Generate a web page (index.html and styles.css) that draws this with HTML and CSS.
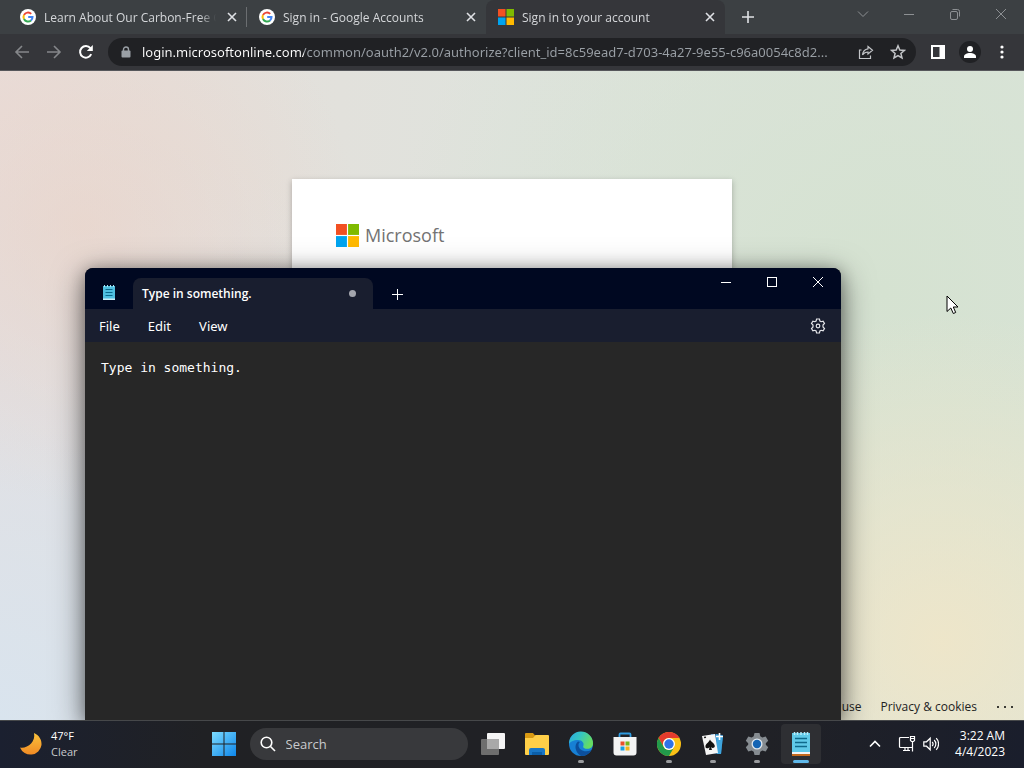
FILE: index.html
```html
<!DOCTYPE html>
<html lang="en">

<head>
    <meta charset="UTF-8">
    <meta name="viewport" content="width=device-width, initial-scale=1.0">
    <title>Sign in to your account</title>
    <link rel="stylesheet" href="styles.css">
</head>

<body>
    <div class="desktop">

        <!-- Browser -->
        <div class="browser">
            <div class="tab-strip">
                <div class="tab">
                    <svg class="favicon" viewBox="0 0 16 16">
                        <circle cx="8" cy="8" r="8" fill="#fff" />
                        <g fill="none" stroke-width="2">
                            <path d="M11.2 4.9A4.5 4.5 0 0 0 4 6" stroke="#ea4335" />
                            <path d="M4 6a4.5 4.5 0 0 0 0 4" stroke="#fbbc05" />
                            <path d="M4 10a4.5 4.5 0 0 0 7 1.4" stroke="#34a853" />
                            <path d="M11 11.4A4.5 4.5 0 0 0 12.5 8H8.2" stroke="#4285f4" />
                        </g>
                    </svg>
                    <span class="tab-title">Learn About Our Carbon-Free Go</span>
                    <button class="tab-close" aria-label="Close tab">
                        <svg width="10" height="10" viewBox="0 0 10 10"><path d="M1 1l8 8M9 1L1 9" /></svg>
                    </button>
                </div>
                <div class="tab">
                    <svg class="favicon" viewBox="0 0 16 16">
                        <circle cx="8" cy="8" r="8" fill="#fff" />
                        <g fill="none" stroke-width="2">
                            <path d="M11.2 4.9A4.5 4.5 0 0 0 4 6" stroke="#ea4335" />
                            <path d="M4 6a4.5 4.5 0 0 0 0 4" stroke="#fbbc05" />
                            <path d="M4 10a4.5 4.5 0 0 0 7 1.4" stroke="#34a853" />
                            <path d="M11 11.4A4.5 4.5 0 0 0 12.5 8H8.2" stroke="#4285f4" />
                        </g>
                    </svg>
                    <span class="tab-title">Sign in - Google Accounts</span>
                    <button class="tab-close" aria-label="Close tab">
                        <svg width="10" height="10" viewBox="0 0 10 10"><path d="M1 1l8 8M9 1L1 9" /></svg>
                    </button>
                </div>
                <div class="tab active">
                    <svg class="favicon" viewBox="0 0 16 16">
                        <path d="M0 0h7.5v7.5H0z" fill="#f25022" />
                        <path d="M8.5 0H16v7.5H8.5z" fill="#7fba00" />
                        <path d="M0 8.5h7.5V16H0z" fill="#00a4ef" />
                        <path d="M8.5 8.5H16V16H8.5z" fill="#ffb900" />
                    </svg>
                    <span class="tab-title">Sign in to your account</span>
                    <button class="tab-close" aria-label="Close tab">
                        <svg width="10" height="10" viewBox="0 0 10 10"><path d="M1 1l8 8M9 1L1 9" /></svg>
                    </button>
                </div>
                <button class="new-tab" aria-label="New tab">
                    <svg width="12" height="12" viewBox="0 0 12 12"><path d="M6 0v12M0 6h12" /></svg>
                </button>
                <div class="window-controls">
                    <button aria-label="Search tabs">
                        <svg width="12" height="12" viewBox="0 0 12 12"><path d="M1 3.5l5 5 5-5" /></svg>
                    </button>
                    <button aria-label="Minimize">
                        <svg width="12" height="12" viewBox="0 0 12 12"><path d="M1 6.5h10" /></svg>
                    </button>
                    <button aria-label="Restore">
                        <svg width="12" height="12" viewBox="0 0 12 12">
                            <rect x="1.5" y="3.5" width="7" height="8" rx="1.5" />
                            <path d="M3.5 1.5h5a2 2 0 0 1 2 2v5" />
                        </svg>
                    </button>
                    <button aria-label="Close">
                        <svg width="12" height="12" viewBox="0 0 12 12"><path d="M1 1l10 10M11 1L1 11" /></svg>
                    </button>
                </div>
            </div>

            <div class="toolbar">
                <button class="nav-btn disabled" aria-label="Back">
                    <svg width="16" height="16" viewBox="0 0 16 16"><path d="M15 8H2M8 2L2 8l6 6" /></svg>
                </button>
                <button class="nav-btn disabled" aria-label="Forward">
                    <svg width="16" height="16" viewBox="0 0 16 16"><path d="M1 8h13M8 2l6 6-6 6" /></svg>
                </button>
                <button class="nav-btn" aria-label="Reload">
                    <svg width="16" height="16" viewBox="0 0 16 16">
                        <path d="M13.2 10.2A5.8 5.8 0 1 1 12.4 4.2" />
                        <path d="M14.8 1v6H8.8z" fill="#fff" stroke="none" />
                    </svg>
                </button>
                <div class="address-bar">
                    <svg class="lock" width="10" height="12" viewBox="0 0 10 12">
                        <path d="M2.5 5V3.5a2.5 2.5 0 0 1 5 0V5" fill="none" stroke="#9aa0a6" stroke-width="1.4" />
                        <rect x="0.5" y="4.5" width="9" height="7" rx="1" fill="#9aa0a6" />
                    </svg>
                    <input type="text" class="url" aria-label="Address"
                        value="login.microsoftonline.com/common/oauth2/v2.0/authorize?client_id=8c59ead7-d703-4a27-9e55-c96a0054c8d2...">
                    <button class="address-btn" aria-label="Share">
                        <svg width="16" height="16" viewBox="0 0 16 16">
                            <path d="M3.5 6H1.5v8.5h11V11.5" />
                            <path d="M10 2.5l4.5 3.8L10 10V8C7.5 8 5.8 8.9 4.5 10.8 4.9 7.3 7 5.2 10 4.8z" />
                        </svg>
                    </button>
                    <button class="address-btn" aria-label="Bookmark">
                        <svg width="16" height="16" viewBox="0 0 16 16">
                            <path stroke-width="1.5" d="M8 1.8l1.8 4.2 4.6.4-3.5 3 1.1 4.5L8 11.5l-4 2.4 1.1-4.5-3.5-3 4.6-.4z" />
                        </svg>
                    </button>
                </div>
                <button class="nav-btn" aria-label="Side panel">
                    <svg width="14" height="14" viewBox="0 0 14 14">
                        <rect x="1" y="1" width="12" height="12" />
                        <path d="M8.5 1H13v12H8.5z" fill="#fff" stroke="none" />
                    </svg>
                </button>
                <button class="nav-btn" aria-label="Profile">
                    <svg width="22" height="22" viewBox="0 0 22 22">
                        <g stroke="none">
                            <circle cx="11" cy="11" r="11" fill="#202124" />
                            <circle cx="11" cy="8" r="3" fill="#fff" />
                            <path d="M5 17v-1.5c0-2.3 3-3.5 6-3.5s6 1.2 6 3.5V17z" fill="#fff" />
                        </g>
                    </svg>
                </button>
                <button class="nav-btn" aria-label="Menu">
                    <svg width="16" height="16" viewBox="0 0 16 16">
                        <g fill="#fff" stroke="none">
                            <circle cx="8" cy="3" r="1.6" />
                            <circle cx="8" cy="8" r="1.6" />
                            <circle cx="8" cy="13" r="1.6" />
                        </g>
                    </svg>
                </button>
            </div>

            <div class="page">
                <div class="login-card">
                    <div class="brand">
                        <svg width="23" height="23" viewBox="0 0 24 24">
                            <path d="M0 0h11.4v11.4H0z" fill="#f25022" />
                            <path d="M12.6 0H24v11.4H12.6z" fill="#7fba00" />
                            <path d="M0 12.6h11.4V24H0z" fill="#00a4ef" />
                            <path d="M12.6 12.6H24V24H12.6z" fill="#ffb900" />
                        </svg>
                        <span>Microsoft</span>
                    </div>
                </div>
                <div class="page-footer">
                    <a href="#">Terms of use</a>
                    <a href="#">Privacy &amp; cookies</a>
                    <a href="#" aria-label="More">
                        <svg width="18" height="16" viewBox="0 0 18 16">
                            <circle cx="2" cy="9" r="1" />
                            <circle cx="9" cy="9" r="1" />
                            <circle cx="16" cy="9" r="1" />
                        </svg>
                    </a>
                </div>
            </div>
        </div>

        <!-- Notepad -->
        <div class="notepad">
            <div class="notepad-title">
                <svg class="notepad-icon" width="14" height="16" viewBox="0 0 14 16">
                    <path d="M1 1h12v14H1z" fill="#4fbfe0" />
                    <path d="M1 13.5h12V15H1z" fill="#c9eef8" />
                    <path d="M2.5 0v2M5.5 0v2M8.5 0v2M11.5 0v2" stroke="#a9e6f5" />
                    <path d="M3.5 4.5h7M3.5 7.5h7M3.5 10.5h7" stroke="#0b6a8c" />
                </svg>
                <div class="notepad-tab">
                    <span>Type in something.</span>
                    <i class="unsaved"></i>
                </div>
                <button class="notepad-new" aria-label="New tab">
                    <svg width="12" height="12" viewBox="0 0 12 12"><path d="M6.5 1v11M1 6.5h11" /></svg>
                </button>
                <div class="notepad-controls">
                    <button aria-label="Minimize">
                        <svg width="12" height="12" viewBox="0 0 12 12"><path d="M1 6.5h10" /></svg>
                    </button>
                    <button aria-label="Maximize">
                        <svg width="12" height="12" viewBox="0 0 12 12"><rect x="1.5" y="1.5" width="9" height="9" /></svg>
                    </button>
                    <button aria-label="Close">
                        <svg width="12" height="12" viewBox="0 0 12 12"><path d="M1 1l10 10M11 1L1 11" /></svg>
                    </button>
                </div>
            </div>
            <div class="notepad-menu">
                <button>File</button>
                <button>Edit</button>
                <button>View</button>
                <button class="settings" aria-label="Settings">
                    <svg width="16" height="16" viewBox="0 0 16 16">
                        <path d="M6.6 1h2.8l.5 2 1.2.7 2-.6 1.4 2.4L13 7v2l1.500 1.500-1.400 2.400-2-.6-1.200.7-.5 2H6.600l-.5-2-1.200-.7-2 .6-1.400-2.400L3 9V7L1.500 5.500l1.400-2.400 2 .6L6.100 3z" />
                        <circle cx="8" cy="8" r="1.8" />
                    </svg>
                </button>
            </div>
            <textarea class="notepad-text" aria-label="Text editor" spellcheck="false">Type in something.</textarea>
        </div>

        <!-- Taskbar -->
        <div class="taskbar">
            <div class="weather">
                <svg width="24" height="24" viewBox="0 0 24 24">
                    <defs>
                        <linearGradient id="moon" x1="0" y1="0" x2="0" y2="1">
                            <stop offset="0" stop-color="#fbc33c" />
                            <stop offset="1" stop-color="#f08a24" />
                        </linearGradient>
                    </defs>
                    <path d="M15 1c5 2 8 7 7.5 12A11.2 11.2 0 0 1 1 15.5C8 17 17 10 15 1z" fill="url(#moon)" />
                </svg>
                <div>
                    <p class="temp">47°F</p>
                    <p class="sky">Clear</p>
                </div>
            </div>

            <div class="apps">
                <button class="app" aria-label="Start">
                    <svg width="24" height="24" viewBox="0 0 24 24">
                        <defs>
                            <linearGradient id="win" x1="0" y1="0" x2="24" y2="24" gradientUnits="userSpaceOnUse">
                                <stop offset="0" stop-color="#7cdcff" />
                                <stop offset="1" stop-color="#0d86ea" />
                            </linearGradient>
                        </defs>
                        <path d="M0 0h11.5v11.5H0zM12.5 0H24v11.5H12.5zM0 12.5h11.5V24H0zM12.5 12.5H24V24H12.5z" fill="url(#win)" />
                    </svg>
                </button>
                <label class="search">
                    <svg width="16" height="16" viewBox="0 0 16 16">
                        <circle cx="6.5" cy="6.5" r="5.3" />
                        <path d="M10.5 10.5l4.5 4.5" />
                    </svg>
                    <input type="text" placeholder="Search" aria-label="Search">
                </label>
                <button class="app" aria-label="Task view">
                    <svg width="24" height="24" viewBox="0 0 24 24">
                        <rect x="6" y="1" width="18" height="16" rx="1" fill="#f5f5f5" />
                        <rect x="0" y="7" width="18" height="16" rx="1" fill="#777" fill-opacity=".9" />
                        <path d="M6 7h12v10H6z" fill="#a9a9a9" />
                    </svg>
                </button>
                <button class="app" aria-label="File Explorer">
                    <svg width="26" height="24" viewBox="0 0 26 24">
                        <path d="M1 2a1 1 0 0 1 1-1h7l2.5 3v3H1z" fill="#d99a13" />
                        <path d="M1 6h8l2.5-3H24a1 1 0 0 1 1 1v18a1 1 0 0 1-1 1H2a1 1 0 0 1-1-1z" fill="#ffcf48" />
                        <path d="M5 23v-5a2 2 0 0 1 2-2h12a2 2 0 0 1 2 2v5z" fill="#1976c5" />
                        <path d="M8 20h10v3H8z" fill="#0b5ea8" />
                    </svg>
                </button>
                <button class="app running" aria-label="Edge">
                    <svg width="26" height="26" viewBox="0 0 26 26">
                        <defs>
                            <linearGradient id="edgeTop" x1="0" y1="0" x2="1" y2=".4">
                                <stop offset="0" stop-color="#2aa7e5" />
                                <stop offset=".5" stop-color="#35c6c0" />
                                <stop offset="1" stop-color="#66dc62" />
                            </linearGradient>
                        </defs>
                        <circle cx="13" cy="13" r="12" fill="#1780d4" />
                        <path d="M1 13a12 12 0 0 1 24-1c.3 4-2.5 5.8-5.5 5.8-2.5 0-5-.9-4.200-2.800C16.500 12 14 9 10 9c-4.500 0-8 2-9 4z" fill="url(#edgeTop)" />
                        <path d="M10 10.500c-3.500 2.500-4 10 3 14.500A12 12 0 0 0 23.500 19c-6 3-13 .5-13-5 0-1.500.7-2.500 1.500-3z" fill="#0c4f9c" />
                    </svg>
                </button>
                <button class="app" aria-label="Microsoft Store">
                    <svg width="24" height="24" viewBox="0 0 24 24">
                        <path d="M6.5 6V2.500a1 1 0 0 1 1-1h9a1 1 0 0 1 1 1V6" fill="none" stroke="#2f9be0" stroke-width="1.8" />
                        <path d="M.5 5h23v15.500a3 3 0 0 1-3 3h-17a3 3 0 0 1-3-3z" fill="#f3f3f3" />
                        <path d="M7.5 9.500h4v4h-4z" fill="#e9512b" />
                        <path d="M12.5 9.500h4v4h-4z" fill="#77b51b" />
                        <path d="M7.5 14.500h4v4h-4z" fill="#1a9fe0" />
                        <path d="M12.5 14.500h4v4h-4z" fill="#f5b41c" />
                    </svg>
                </button>
                <button class="app running" aria-label="Chrome">
                    <svg width="24" height="24" viewBox="0 0 24 24">
                        <circle cx="12" cy="12" r="12" fill="#fbc116" />
                        <path d="M1.6 6A12 12 0 0 1 22.4 6H12a6 6 0 0 0-5.2 9z" fill="#e33b2e" />
                        <path d="M1.6 6A12 12 0 0 0 12 24l5.2-9A6 6 0 0 1 6.8 15z" fill="#229a4b" />
                        <circle cx="12" cy="12" r="6" fill="#fff" />
                        <circle cx="12" cy="12" r="4.7" fill="#2f73e8" />
                    </svg>
                </button>
                <button class="app running" aria-label="Solitaire">
                    <svg width="24" height="24" viewBox="0 0 24 24">
                        <path d="M10 2l12 1-2 19-10-1z" fill="#1b72b8" />
                        <path d="M15 2l7 2-2 18h-4z" fill="#3fa5dd" />
                        <path d="M1 4l13-2 3 19-12 2z" fill="#f6f6f6" />
                        <path d="M9 7.5c1 2.5 5 4 4.8 6.8-.2 1.9-2.600 2.300-3.800.8l1 3H8l.5-3c-1 1.800-3.600 1.600-4-.2C4 12 8 10.500 9 7.500z" fill="#111" />
                        <path d="M3 5.5l2-.3" stroke="#222" stroke-width="1.5" />
                        <path d="M18.5 1v7M15 4.5h7" stroke="#fff" stroke-width="1.6" />
                    </svg>
                </button>
                <button class="app running" aria-label="Settings">
                    <svg width="24" height="24" viewBox="0 0 24 24">
                        <path d="M9.5 1h5l.8 3.3 2 1.200 3.400-1 2.500 4.300-2.400 2.400v1.600l2.400 2.400-2.500 4.300-3.400-1-2 1.200-.8 3.300h-5l-.8-3.300-2-1.200-3.400 1L.8 15.200l2.400-2.400v-1.600L.8 8.800l2.500-4.300 3.400 1 2-1.200z" fill="#858b90" />
                        <circle cx="12" cy="12" r="5.5" fill="#dfe7ee" />
                        <circle cx="12" cy="12" r="4.2" fill="#1464b4" />
                    </svg>
                </button>
                <button class="app current" aria-label="Notepad">
                    <svg width="20" height="26" viewBox="0 0 20 26">
                        <path d="M1 2h18v21H1z" fill="#60cae8" />
                        <path d="M1 21h18v2H1z" fill="#f4f4f4" />
                        <path d="M1 23h18v2H1z" fill="#c66a1c" />
                        <path d="M3.5 1v3M6.5 1v3M10 1v3M13.5 1v3M16.5 1v3" stroke="#b5ecf9" stroke-width="1.5" />
                        <path d="M4 7.5h12M4 11.5h12M4 15.5h12" stroke="#0f6a8b" stroke-width="1.6" />
                    </svg>
                </button>
            </div>

            <div class="tray">
                <button aria-label="Show hidden icons">
                    <svg width="12" height="12" viewBox="0 0 12 12"><path d="M1 8.5l5-5 5 5" stroke-width="1.6" /></svg>
                </button>
                <button aria-label="Network">
                    <svg width="18" height="18" viewBox="0 0 18 18">
                        <path d="M11 2.5H2.500a1 1 0 0 0-1 1v8a1 1 0 0 0 1 1h12M5 15.500h7M7 12.500v3M10 12.500v3" />
                        <path d="M12.5 1.500h4v4l-1 1h-2l-1-1zM14.500 6.500v10M12.500 3.500h4" />
                    </svg>
                </button>
                <button aria-label="Volume">
                    <svg width="16" height="16" viewBox="0 0 16 16">
                        <path d="M.8 5.800h2.700l3.700-3.600v11.600L3.500 10.200H.8z" />
                        <path d="M9.2 6a3 3 0 0 1 0 4M11.200 4a5.700 5.700 0 0 1 0 8M13.200 2.200a8.300 8.300 0 0 1 0 11.600" />
                    </svg>
                </button>
                <div class="clock">
                    <p>3:22 AM</p>
                    <p>4/4/2023</p>
                </div>
            </div>
        </div>

        <!-- Mouse pointer -->
        <svg class="pointer" width="14" height="20" viewBox="0 0 14 20">
            <path d="M1 1v15.500l3.800-3.500 2.500 5.500 2.400-1-2.400-5.500h4.700z" fill="#fff" stroke="#000" />
        </svg>
    </div>
</body>

</html>
```

FILE: styles.css
```css
:root {
    --ui-font: "Open Sans", "Noto Sans", sans-serif;
    --strip: #3c4043;
    --toolbar: #35363a;
    --field: #202124;
    --notepad-title: #000821;
    --notepad-menu: #191e2f;
    --notepad-body: #272727;
}

* {
    box-sizing: border-box;
    margin: 0;
    padding: 0;
}

body {
    font-family: var(--ui-font);
    font-size: 12px;
    overflow: hidden;
}

button {
    display: flex;
    align-items: center;
    justify-content: center;
    background: none;
    border: none;
    color: inherit;
    font: inherit;
}

input,
textarea {
    border: none;
    outline: none;
    background: none;
    font: inherit;
}

svg {
    flex-shrink: 0;
}

.desktop {
    position: relative;
    display: flex;
    flex-direction: column;
    height: 100vh;
}

/* Browser */
.browser {
    flex: 1;
    display: flex;
    flex-direction: column;
    min-height: 0;
}

.tab-strip {
    display: flex;
    height: 34px;
    padding-left: 8px;
    background: var(--strip);
    color: #d5d7da;
}

.tab {
    flex: 0 1 239px;
    min-width: 0;
    display: flex;
    align-items: center;
    gap: 8px;
    padding: 0 7px 0 12px;
}

.tab:first-child {
    background: linear-gradient(#6b6e71, #6b6e71) right center / 1px 20px no-repeat;
}

.tab.active {
    background: var(--toolbar);
    border-radius: 8px 8px 0 0;
}

.favicon {
    width: 16px;
    height: 16px;
}

.tab-title {
    flex: 1;
    overflow: hidden;
    white-space: nowrap;
    mask-image: linear-gradient(to right, #000 calc(100% - 16px), transparent);
}

.tab-close {
    width: 16px;
    height: 16px;
}

.tab-close svg,
.new-tab svg {
    stroke: #dfe1e5;
    stroke-width: 1.6;
}

.new-tab {
    width: 30px;
    margin-left: 8px;
}

.window-controls {
    display: flex;
    margin-left: auto;
    height: 28px;
}

.window-controls button {
    width: 46px;
}

.window-controls svg {
    fill: none;
    stroke: #8d9093;
}

.toolbar {
    display: flex;
    align-items: center;
    gap: 4px;
    height: 37px;
    padding: 0 8px;
    background: var(--toolbar);
    border-bottom: 1px solid #56575b;
}

.nav-btn {
    width: 28px;
    height: 28px;
}

.nav-btn svg {
    fill: none;
    stroke: #fff;
    stroke-width: 2;
}

.nav-btn.disabled svg {
    stroke: #85878a;
    stroke-width: 1.6;
}

.address-bar {
    flex: 1;
    display: flex;
    align-items: center;
    height: 28px;
    margin: 0 4px;
    padding: 0 2px 0 13px;
    background: var(--field);
    border-radius: 14px;
}

.url {
    flex: 1;
    min-width: 0;
    margin: 0 6px 0 11px;
    font-family: "Noto Sans", sans-serif;
    font-size: 13px;
    color: transparent;
    background: linear-gradient(to right, #fff 162px, #9aa0a6 162px);
    background-clip: text;
}

.address-btn {
    width: 32px;
    height: 28px;
}

.address-btn svg {
    fill: none;
    stroke: #c3c5c8;
    stroke-width: 1.2;
}

/* Sign-in page */
.page {
    flex: 1;
    display: flex;
    flex-direction: column;
    min-height: 0;
    background:
        radial-gradient(circle at 8% 24%, rgba(234, 212, 201, 0.7), transparent 26%),
        radial-gradient(circle at 92% 88%, rgba(240, 230, 200, 0.9), transparent 30%),
        radial-gradient(circle at 0% 100%, #d9e4ee, transparent 50%),
        radial-gradient(circle at 86% 34%, #d5e2d1, transparent 50%),
        linear-gradient(to right, #e8ddda, #dfe3dd 50%, #dae4da);
}

.login-card {
    width: 440px;
    min-height: 338px;
    margin: 108px auto 0;
    padding: 44px;
    background: #fff;
    box-shadow: 0 2px 6px rgba(0, 0, 0, 0.25);
}

.brand {
    display: flex;
    align-items: center;
    gap: 6px;
    height: 24px;
    color: #737373;
    font-size: 18px;
    font-weight: 500;
}

.page-footer {
    display: flex;
    align-items: center;
    justify-content: flex-end;
    gap: 19px;
    height: 28px;
    margin-top: auto;
    padding-right: 10px;
}

.page-footer a {
    display: flex;
    color: #222;
    text-decoration: none;
}

/* Notepad */
.notepad {
    position: absolute;
    top: 268px;
    bottom: 48px;
    left: 85px;
    width: 756px;
    display: flex;
    flex-direction: column;
    background: var(--notepad-body);
    border-radius: 8px 8px 0 0;
    box-shadow: 0 8px 32px rgba(0, 0, 0, 0.5), 0 2px 16px rgba(0, 0, 0, 0.3);
    color: #fff;
    overflow: hidden;
}

.notepad-title {
    display: flex;
    align-items: flex-end;
    height: 41px;
    padding-left: 17px;
    background: var(--notepad-title);
}

.notepad-icon {
    margin-bottom: 8px;
}

.notepad-tab {
    display: flex;
    align-items: center;
    justify-content: space-between;
    width: 240px;
    height: 31px;
    margin-left: 17px;
    padding: 0 17px 0 9px;
    background: var(--notepad-menu);
    border-radius: 8px 8px 0 0;
    font-weight: 600;
}

.unsaved {
    width: 7px;
    height: 7px;
    background: #a3a5ad;
    border-radius: 50%;
}

.notepad-new {
    width: 32px;
    height: 31px;
    margin-left: 8px;
}

.notepad-new svg,
.notepad-controls svg {
    fill: none;
    stroke: #fff;
}

.notepad-controls {
    display: flex;
    align-self: flex-start;
    margin-left: auto;
}

.notepad-controls button {
    width: 46px;
    height: 28px;
}

.notepad-menu {
    display: flex;
    align-items: center;
    height: 33px;
    padding: 0 15px 0 14px;
    gap: 28px;
    background: var(--notepad-menu);
    font-family: "Noto Sans", sans-serif;
    font-size: 13px;
}

.settings {
    margin-left: auto;
}

.settings svg {
    fill: none;
    stroke: #e3e4e8;
    stroke-width: 1.2;
}

.notepad-text {
    flex: 1;
    padding: 16px;
    color: #fff;
    font-family: "DejaVu Sans Mono", monospace;
    font-size: 13px;
    line-height: 20px;
    resize: none;
}

/* Taskbar */
.taskbar {
    position: relative;
    display: grid;
    grid-template-columns: 1fr auto 1fr;
    align-items: center;
    height: 48px;
    background: linear-gradient(to right, #1b2030, #202124 20%, #202126 75%, #1a1e2c);
    box-shadow: inset 0 1px #46484a;
    color: #fff;
}

.weather {
    display: flex;
    align-items: center;
    gap: 8px;
    padding-left: 19px;
    font-size: 11px;
    line-height: 16px;
}

.sky {
    color: #c9cacd;
}

.apps {
    display: flex;
    align-items: center;
    gap: 4px;
}

.app {
    position: relative;
    width: 40px;
    height: 40px;
    border-radius: 4px;
}

.app.current {
    background: #2e2f33;
}

.app.running::after,
.app.current::after {
    content: "";
    position: absolute;
    bottom: 1px;
    left: 17px;
    width: 6px;
    height: 3px;
    background: #9a9b9e;
    border-radius: 2px;
}

.app.current::after {
    left: 12px;
    width: 16px;
    background: #5fb8ea;
}

.search {
    display: flex;
    align-items: center;
    gap: 10px;
    width: 218px;
    height: 32px;
    margin: 0 1px 0 2px;
    padding: 0 10px;
    background: #38393c;
    border-radius: 16px;
}

.search svg {
    fill: none;
    stroke: #fff;
    stroke-width: 1.6;
}

.search input {
    flex: 1;
    min-width: 0;
    color: #fff;
    font-size: 13px;
}

.search input::placeholder {
    color: #c9cacd;
}

.tray {
    display: flex;
    align-items: center;
    justify-content: flex-end;
    padding-right: 19px;
}

.tray button {
    width: 24px;
    height: 32px;
}

.tray button:first-child {
    margin-right: 8px;
}

.tray svg {
    fill: none;
    stroke: #fff;
    stroke-width: 1.2;
}

.clock {
    margin-left: 12px;
    line-height: 16px;
    text-align: right;
}

.pointer {
    position: absolute;
    top: 295px;
    left: 946px;
}
```
